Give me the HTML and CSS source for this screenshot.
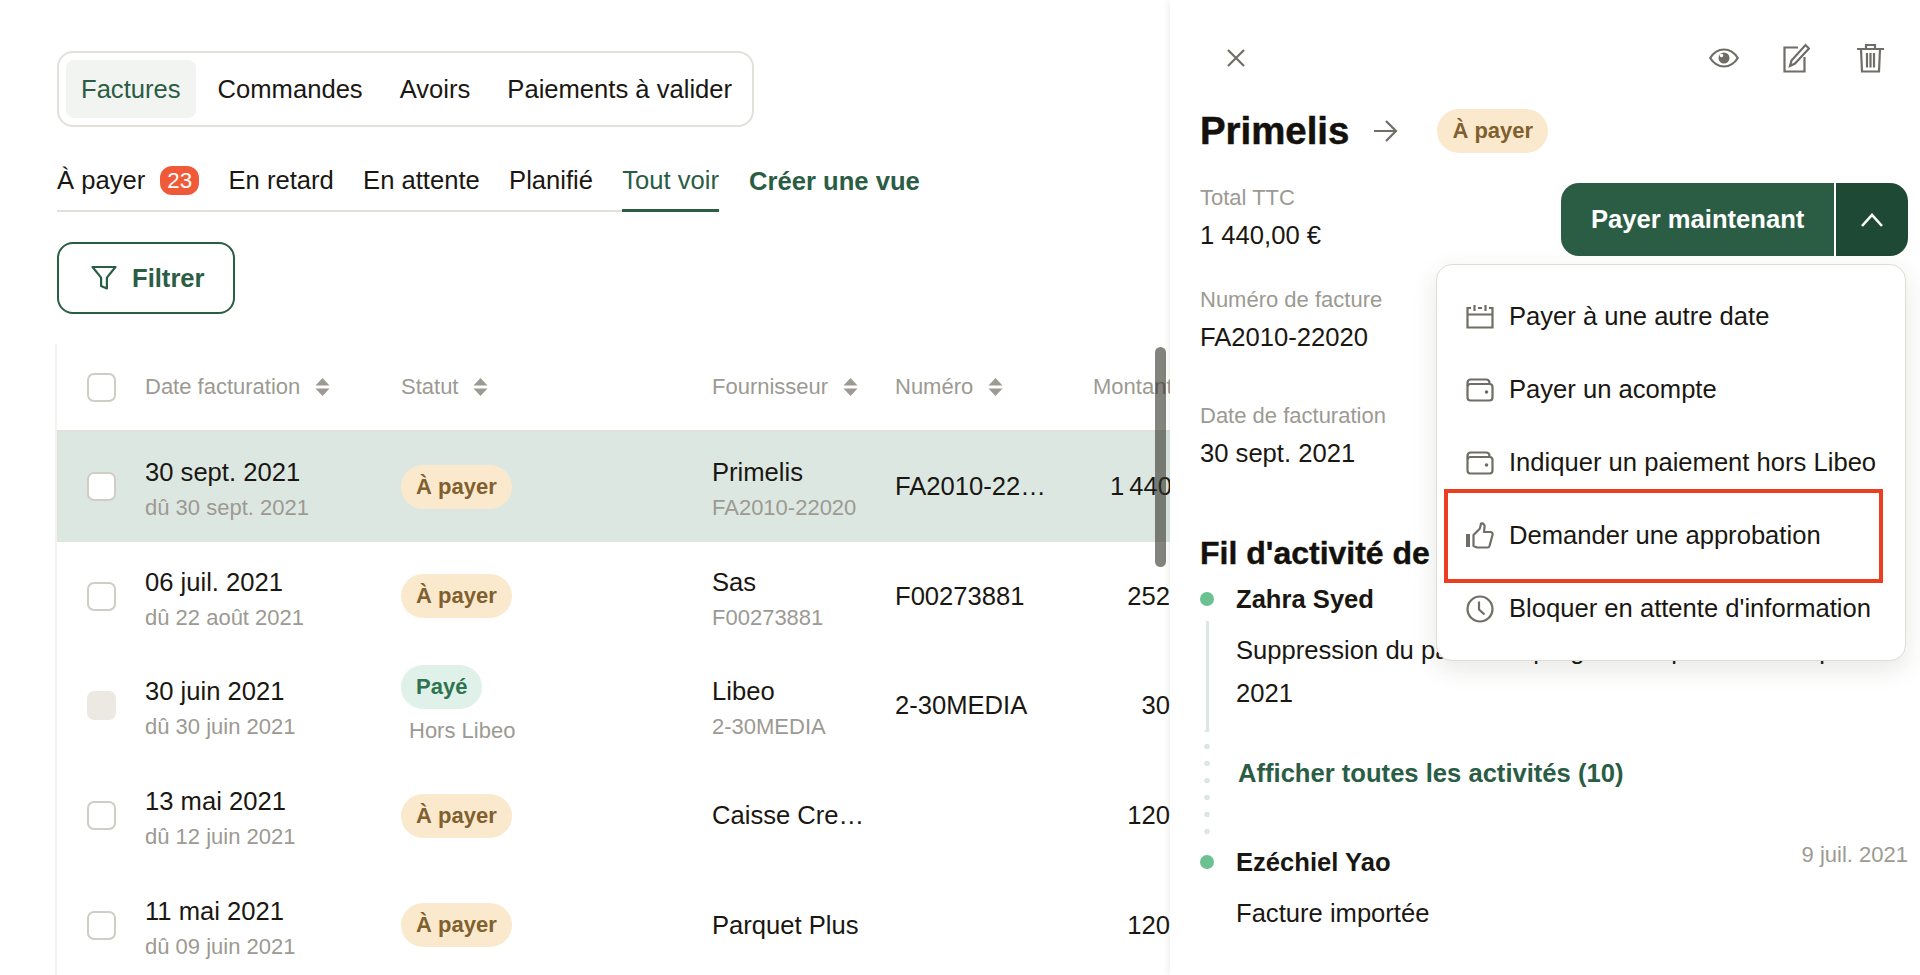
FILE: index.html
```html
<!DOCTYPE html>
<html lang="fr">
<head>
    <meta charset="UTF-8">
    <title>Factures</title>
    <link rel="stylesheet" href="styles.css">
</head>
<body>
    <main class="main">
        <div class="tabs">
            <a class="tab active">Factures</a>
            <a class="tab">Commandes</a>
            <a class="tab">Avoirs</a>
            <a class="tab">Paiements à valider</a>
        </div>

        <div class="views-row">
            <nav class="views">
                <a class="view">À payer <span class="count">23</span></a>
                <a class="view">En retard</a>
                <a class="view">En attente</a>
                <a class="view">Planifié</a>
                <a class="view current">Tout voir</a>
            </nav>
            <a class="new-view">Créer une vue</a>
        </div>

        <button class="filter">
            <svg width="26" height="26" viewBox="0 0 26 26" fill="none" stroke="#2a5d44" stroke-width="2.2" stroke-linejoin="round"><path d="M1.500 2h23l-8.600 10.600V23.500l-5.800-2.600v-8.300z"/></svg>
            Filtrer
        </button>

        <div class="table">
            <div class="row head">
                <span class="check"></span>
                <div class="th">Date facturation <svg class="sort" width="15" height="18" viewBox="0 0 15 18"><path d="M7.500 0l7 7.500h-14zM7.500 18l-7-7.500h14z"/></svg></div>
                <div class="th">Statut <svg class="sort" width="15" height="18" viewBox="0 0 15 18"><path d="M7.500 0l7 7.500h-14zM7.500 18l-7-7.500h14z"/></svg></div>
                <div class="th">Fournisseur <svg class="sort" width="15" height="18" viewBox="0 0 15 18"><path d="M7.500 0l7 7.500h-14zM7.500 18l-7-7.500h14z"/></svg></div>
                <div class="th">Numéro <svg class="sort" width="15" height="18" viewBox="0 0 15 18"><path d="M7.500 0l7 7.500h-14zM7.500 18l-7-7.500h14z"/></svg></div>
                <div class="th">Montant</div>
            </div>

            <div class="row selected">
                <span class="check"></span>
                <div class="stack"><span class="main-text">30 sept. 2021</span><span class="sub-text">dû 30 sept. 2021</span></div>
                <div><span class="badge pay">À payer</span></div>
                <div class="stack"><span class="main-text">Primelis</span><span class="sub-text">FA2010-22020</span></div>
                <div class="cut">FA2010-22020</div>
                <div class="amount">1&thinsp;440,00&thinsp;€</div>
            </div>
            <div class="row">
                <span class="check"></span>
                <div class="stack"><span class="main-text">06 juil. 2021</span><span class="sub-text">dû 22 août 2021</span></div>
                <div><span class="badge pay">À payer</span></div>
                <div class="stack"><span class="main-text">Sas</span><span class="sub-text">F00273881</span></div>
                <div class="cut">F00273881</div>
                <div class="amount">252,50 €</div>
            </div>
            <div class="row">
                <span class="check off"></span>
                <div class="stack"><span class="main-text">30 juin 2021</span><span class="sub-text">dû 30 juin 2021</span></div>
                <div class="status-stack"><span class="badge paid">Payé</span><span class="sub-text hors">Hors Libeo</span></div>
                <div class="stack"><span class="main-text">Libeo</span><span class="sub-text">2-30MEDIA</span></div>
                <div class="cut">2-30MEDIA</div>
                <div class="amount">30,00 €</div>
            </div>
            <div class="row">
                <span class="check"></span>
                <div class="stack"><span class="main-text">13 mai 2021</span><span class="sub-text">dû 12 juin 2021</span></div>
                <div><span class="badge pay">À payer</span></div>
                <div class="cut name">Caisse Credit Mutuel</div>
                <div></div>
                <div class="amount">120,00 €</div>
            </div>
            <div class="row">
                <span class="check"></span>
                <div class="stack"><span class="main-text">11 mai 2021</span><span class="sub-text">dû 09 juin 2021</span></div>
                <div><span class="badge pay">À payer</span></div>
                <div class="cut name">Parquet Plus</div>
                <div></div>
                <div class="amount">120,00 €</div>
            </div>
            <div class="scrollbar"></div>
        </div>
    </main>

    <aside class="panel">
        <div class="panel-top">
            <svg width="20" height="20" viewBox="0 0 20 20" stroke="#6f6d66" stroke-width="2.2"><path d="M2 2l16 16M18 2L2 18"/></svg>
            <div class="panel-actions">
                <svg width="30" height="20" viewBox="0 0 30 20" fill="none" stroke="#6f6d66" stroke-width="2.2"><path d="M1.200 10c3.500-5.600 8-8.500 13.800-8.500S25.300 4.400 28.800 10c-3.500 5.600-8 8.500-13.800 8.500S4.700 15.600 1.200 10z"/><circle cx="15" cy="10" r="5.500" fill="#6f6d66" stroke="none"/><circle cx="12.500" cy="7.500" r="1.800" fill="#fff" stroke="none"/></svg>
                <svg class="edit" width="27" height="30" viewBox="0 0 27 30" fill="none" stroke="#6f6d66" stroke-width="2.2"><path d="M15 4.500H1.500v24h20V14"/><path d="M7 23l1.500-5.500L22.500 2l3.500 3.500L12 20.500z"/></svg>
                <svg width="27" height="30" viewBox="0 0 27 30" fill="none" stroke="#6f6d66" stroke-width="2.2"><path d="M0 6h27M9 6V2h9v4M4 6l1 22.500h17L23 6M10 10v14.500M13.500 10v14.500M17 10v14.500"/></svg>
            </div>
        </div>

        <div class="title-row">
            <h1>Primelis</h1>
            <svg width="24" height="22" viewBox="0 0 24 22" fill="none" stroke="#6f6d66" stroke-width="2.2"><path d="M0 11h22M12 1l10 10-10 10"/></svg>
            <span class="badge pay">À payer</span>
        </div>

        <div class="pay-row">
            <div class="field first">
                <div class="label">Total TTC</div>
                <div class="value">1 440,00 €</div>
            </div>
            <div class="pay-btn">
                <span class="pay-main">Payer maintenant</span>
                <span class="pay-toggle"><svg width="24" height="14" viewBox="0 0 24 14" fill="none" stroke="#fff" stroke-width="2.6"><path d="M2 13L12 2l10 11"/></svg></span>
            </div>
        </div>

        <div class="field">
            <div class="label">Numéro de facture</div>
            <div class="value">FA2010-22020</div>
        </div>
        <div class="field">
            <div class="label">Date de facturation</div>
            <div class="value">30 sept. 2021</div>
        </div>

        <h2>Fil d'activité de la facture</h2>

        <div class="activity">
            <div class="who"><span class="dot"></span><b>Zahra Syed</b></div>
            <div class="what first">Suppression du paiement programmé pour le 30 sept. 2021</div>
            <div class="more"><a>Afficher toutes les activités (10)</a></div>
            <div class="who"><span class="dot"></span><b>Ezéchiel Yao</b><span class="when">9 juil. 2021</span></div>
            <div class="what">Facture importée</div>
        </div>

        <div class="menu">
            <div class="menu-item">
                <svg width="28" height="24" viewBox="0 0 28 24" fill="none" stroke="#6f6d66" stroke-width="2.2"><path d="M5 3H1.500v19.500h25V3H23M1.500 9.500h25M8.500 0v6M19.500 0v6M12 3h4"/></svg>
                Payer à une autre date
            </div>
            <div class="menu-item">
                <svg width="28" height="24" viewBox="0 0 28 24" fill="none" stroke="#6f6d66" stroke-width="2.2"><path d="M1.500 8V5Q1.500 1.500 5 1.500h15Q23.500 1.500 23.500 5V6"/><rect x="1.500" y="6" width="25" height="16.500" rx="3"/><circle cx="20.500" cy="14" r="1.800" fill="#6f6d66" stroke="none"/></svg>
                Payer un acompte
            </div>
            <div class="menu-item">
                <svg width="28" height="24" viewBox="0 0 28 24" fill="none" stroke="#6f6d66" stroke-width="2.2"><path d="M1.500 8V5Q1.500 1.500 5 1.500h15Q23.500 1.500 23.500 5V6"/><rect x="1.500" y="6" width="25" height="16.500" rx="3"/><circle cx="20.500" cy="14" r="1.800" fill="#6f6d66" stroke="none"/></svg>
                Indiquer un paiement hors Libeo
            </div>
            <div class="menu-item marked">
                <svg width="28" height="28" viewBox="0 0 28 28" fill="none" stroke="#6f6d66" stroke-width="2.2" stroke-linejoin="round"><path d="M2 12v13" stroke-width="4"/><path d="M7.500 13l6-6c1-1.500 1-3.500 1.500-5.500 2.500-.5 4 1.500 3.500 4L18 10h6.500c1.500 0 2.500 1.500 2 3l-3 11c-.3 1-1 1.500-2 1.500H11L7.500 24z"/></svg>
                Demander une approbation
            </div>
            <div class="menu-item">
                <svg width="28" height="28" viewBox="0 0 28 28" fill="none" stroke="#6f6d66" stroke-width="2.2"><circle cx="14" cy="14" r="12.500"/><path d="M13 6.500v8l5.500 5"/></svg>
                Bloquer en attente d'information
            </div>
        </div>
    </aside>
</body>
</html>
```

FILE: styles.css
```css
*, *::after {
    box-sizing: border-box;
}
html, body {
    height: 975px;
    margin: 0;
    overflow: hidden;
}
body {
    display: flex;
    font-family: "Liberation Sans", Arial, sans-serif;
    font-size: 25.6px;
    color: #1a1712;
    background: #fff;
}

/* left side */
.main {
    width: 1170px;
    height: 975px;
    padding: 51px 0 0 57px;
    overflow: hidden;
    flex: none;
}
.tabs {
    display: flex;
    gap: 7px;
    width: 697px;
    height: 76px;
    padding: 7px;
    border: 2px solid #e2e0da;
    border-radius: 16px;
}
.tab {
    display: flex;
    align-items: center;
    padding: 0 15px;
    border-radius: 8px;
    white-space: nowrap;
}
.tab.active {
    background: #f2f4f2;
    color: #2a5d44;
}
.views-row {
    display: flex;
    gap: 30px;
    margin-top: 33px;
    height: 52px;
}
.views {
    display: flex;
    gap: 29.3px;
    height: 52px;
    border-bottom: 2px solid #e2e0da;
}
.view {
    display: flex;
    align-items: center;
    gap: 15px;
    height: 52px;
    padding-bottom: 11px;
    white-space: nowrap;
}
.view.current {
    color: #2a5d44;
    border-bottom: 3px solid #2a5d44;
    padding-bottom: 8px;
}
.count {
    display: flex;
    align-items: center;
    justify-content: center;
    width: 39px;
    height: 29px;
    border-radius: 12px;
    background: #f05a38;
    color: #fff;
    font-size: 22.4px;
}
.new-view {
    display: flex;
    align-items: center;
    padding-bottom: 10px;
    color: #2a5d44;
    font-weight: 700;
    white-space: nowrap;
}
.filter {
    display: flex;
    align-items: center;
    gap: 15px;
    width: 178px;
    height: 72px;
    margin-top: 30px;
    padding: 0 0 0 32px;
    border: 2px solid #2a5d44;
    border-radius: 16px;
    background: #fff;
    color: #2a5d44;
    font: 700 25.6px "Liberation Sans", Arial, sans-serif;
}

/* table */
.table {
    position: relative;
    width: 1113px;
    margin-top: 30px;
    box-shadow: -2px 0 0 #f3f2ef;
}
.row {
    display: grid;
    grid-template-columns: 58px 256px 311px 183px 198px 134px;
    align-items: center;
    height: 109.6px;
    padding-left: 30px;
    width: 1200px;
}
.row.head {
    height: 88px;
    border-bottom: 2px solid #e2e0da;
}
.row.selected {
    background: #dce7e2;
}
.check {
    width: 29px;
    height: 29px;
    border: 2px solid #cfcdc6;
    border-radius: 7px;
    background: #fff;
}
.check.off {
    border: none;
    background: #ece9e2;
}
.th {
    display: flex;
    align-items: center;
    gap: 15px;
    font-size: 22px;
    color: #9c9a92;
    white-space: nowrap;
}
.sort {
    fill: #9c9a92;
}
.stack {
    display: flex;
    flex-direction: column;
    gap: 6px;
    padding-top: 7px;
    line-height: 30px;
}
.main-text {
    white-space: nowrap;
}
.sub-text {
    font-size: 22px;
    color: #9c9a92;
    white-space: nowrap;
}
.badge {
    display: inline-flex;
    align-items: center;
    height: 44px;
    padding: 0 15px;
    border-radius: 22px;
    font-size: 22px;
    font-weight: 700;
    white-space: nowrap;
}
.badge.pay {
    background: #fbe9cd;
    color: #80602f;
}
.badge.paid {
    background: #dff1e9;
    color: #2f7350;
}
.status-stack {
    display: flex;
    flex-direction: column;
    align-items: flex-start;
    gap: 7px;
    line-height: 30px;
}
.hors {
    padding-left: 8px;
}
.cut {
    width: 152px;
    overflow: hidden;
    white-space: nowrap;
    text-overflow: ellipsis;
}
.cut.name {
    width: 155px;
}
.amount {
    text-align: right;
    white-space: nowrap;
}
.scrollbar {
    position: absolute;
    left: 1098px;
    top: 3px;
    width: 11px;
    height: 220px;
    border-radius: 6px;
    background: rgba(50, 50, 40, .6);
}

/* right panel */
.panel {
    position: relative;
    width: 750px;
    height: 975px;
    padding: 0 12px 0 30px;
    overflow: hidden;
    flex: none;
    background: #fff;
    box-shadow: -2px 0 6px rgba(60, 60, 40, .08);
}
.panel-top {
    display: flex;
    align-items: center;
    justify-content: space-between;
    height: 30px;
    margin-top: 43px;
    padding: 0 24px 0 26px;
}
.panel-actions {
    display: flex;
    align-items: center;
    gap: 44px;
}
.edit {
    margin-right: 3.5px;
}
.title-row {
    display: flex;
    align-items: center;
    height: 44px;
    margin-top: 36px;
}
.title-row svg {
    margin: 0 39px 0 25px;
}
h1 {
    margin: 0;
    font-size: 38.4px;
    color: #14110c;
    -webkit-text-stroke: .5px #14110c;
}
.pay-row {
    display: flex;
    justify-content: space-between;
    margin-top: 30px;
}
.field {
    height: 116px;
}
.field.first {
    height: 103px;
    padding-top: 1px;
}
.label {
    font-size: 22px;
    line-height: 28px;
    color: #9c9a92;
}
.value {
    margin-top: 8px;
    line-height: 30px;
}
.pay-btn {
    display: flex;
    height: 73px;
    color: #fff;
    font-weight: 700;
}
.pay-main {
    display: flex;
    align-items: center;
    width: 275px;
    padding-left: 30px;
    border-radius: 18px 0 0 18px;
    background: #2a5d44;
    border-right: 2px solid #fff;
    white-space: nowrap;
}
.pay-toggle {
    display: flex;
    align-items: center;
    justify-content: center;
    width: 72px;
    border-radius: 0 18px 18px 0;
    background: #1e4a35;
}
h2 {
    margin: 15px 0 0;
    font-size: 32px;
    line-height: 40px;
    white-space: nowrap;
    color: #14110c;
    -webkit-text-stroke: .4px #14110c;
}
.activity {
    margin-top: 9px;
}
.who {
    display: flex;
    align-items: center;
    height: 34px;
    font-weight: 700;
}
.dot {
    width: 14px;
    height: 14px;
    margin-right: 22px;
    border-radius: 50%;
    background: #6cc190;
}
.when {
    margin-left: auto;
    margin-top: -14px;
    font-size: 22px;
    font-weight: 400;
    color: #9c9a92;
}
.what {
    margin-left: 36px;
    margin-top: 13px;
    line-height: 43px;
}
.what.first {
    width: 672px;
    height: 109px;
    margin: 5px 0 0 6px;
    padding: 8px 0 0 27px;
    border-left: 3px solid #dce7e2;
}
.more {
    height: 115px;
    padding: 25px 0 0 38px;
    background: radial-gradient(circle, #dce7e2 2.500px, transparent 3px) 4px 8px / 6px 17px repeat-y;
    line-height: 36px;
    color: #2a5d44;
    font-weight: 700;
}

/* dropdown */
.menu {
    position: absolute;
    left: 266px;
    top: 264px;
    width: 470px;
    height: 397px;
    padding: 15px 0 0 29px;
    border: 1px solid #dedcd5;
    border-radius: 16px;
    background: #fff;
    box-shadow: 0 8px 24px rgba(60, 60, 40, .12);
}
.menu-item {
    position: relative;
    display: flex;
    align-items: center;
    gap: 15px;
    height: 73px;
    white-space: nowrap;
}
.menu-item svg {
    flex: none;
}
.menu-item.marked::after {
    content: "";
    position: absolute;
    left: -22px;
    top: -10px;
    width: 439px;
    height: 94px;
    border: 4px solid #ec3f21;
}
```
